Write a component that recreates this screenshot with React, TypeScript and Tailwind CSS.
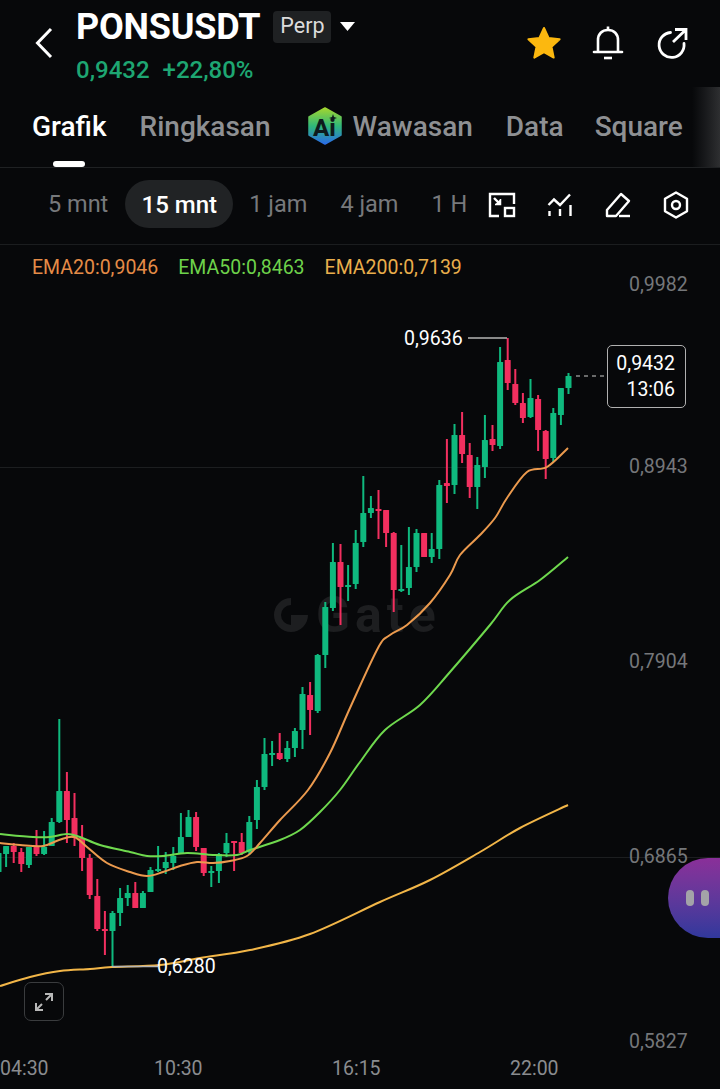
import React from "react";

type C = [string, number, number, number, number];
const candles: C[] = [
  ["g",853,853,872,889],["g",846,846,854,867],["r",843,846,852,863],["r",848,852,864,872],["g",847,847,865,868],
  ["r",830,847,854,856],["g",831,847,854,855],["g",818,822,846,846],["g",719,791,822,823],["r",772,791,820,843],
  ["r",793,818,838,846],["r",825,838,858,871],["r",854,858,895,899],["r",879,896,929,931],["r",911,929,931,955],
  ["g",911,913,931,966],["g",888,898,913,926],["g",885,893,898,906],["r",882,893,908,908],["g",891,893,908,908],
  ["g",867,870,892,892],["g",846,869,871,872],["g",852,862,868,874],["g",847,856,863,870],["g",813,837,854,854],
  ["g",810,817,837,837],["r",812,817,847,851],["r",848,848,873,876],["g",866,871,873,887],["g",853,854,871,883],
  ["g",833,843,853,857],["r",841,841,843,871],["r",833,842,853,855],["g",816,822,852,855],["g",780,787,820,829],
  ["g",738,754,787,790],["g",741,753,755,766],["r",733,753,759,760],["g",741,748,759,762],["g",728,731,748,757],
  ["g",687,694,730,749],["r",682,695,710,735],["g",654,655,711,713],["g",602,607,655,668],["g",543,562,608,611],
  ["r",544,562,587,625],["g",565,585,587,601],["g",530,543,584,589],["g",476,513,542,547],["g",496,508,513,518],
  ["r",490,509,511,539],["r",510,510,533,547],["r",532,533,590,612],["g",545,589,591,592],["g",527,567,588,595],
  ["g",529,533,567,572],["r",533,533,557,557],["g",533,549,557,563],["g",480,485,549,559],["r",439,483,486,503],
  ["g",424,435,485,494],["r",412,435,454,463],["r",443,455,487,498],["g",457,465,487,509],["g",415,440,467,478],
  ["r",425,439,445,451],["g",347,362,446,449],["r",338,360,383,390],["r",369,384,403,405],["r",393,403,418,423],
  ["g",379,398,417,418],["r",395,399,430,451],["r",430,431,459,479],["g",408,413,458,462],["g",388,388,415,425],
  ["g",373,376,388,394],
];

const orange: number[][] = [[0,843],[20,845],[43,846],[59,840],[74,837],[87,847],[107,863],[130,872],[147,876],[163,872],[180,866],[197,862],[213,863],[230,861],[247,856],[260,843],[280,820],[308,790],[330,753],[350,708],[378,648],[390,635],[407,625],[430,603],[450,575],[460,555],[480,535],[495,518],[507,498],[527,472],[547,467],[568,448]];
const green: number[][] = [[0,834],[33,837],[50,837],[67,834],[80,837],[100,845],[130,852],[147,856],[163,856],[187,853],[213,855],[237,855],[250,850],[280,840],[300,830],[320,812],[340,790],[360,762],[385,730],[420,705],[450,672],[490,625],[510,600],[540,580],[568,557]];
const yellow: number[][] = [[0,986],[30,977],[60,971],[90,969],[112,967],[160,965],[200,958],[250,950],[310,934],[380,902],[430,880],[480,852],[520,828],[568,805]];

function smooth(p: number[][]) {
  let d = `M${p[0][0]} ${p[0][1]}`;
  for (let i = 0; i < p.length - 1; i++) {
    const a = p[Math.max(i - 1, 0)], b = p[i], c = p[i + 1], e = p[Math.min(i + 2, p.length - 1)];
    d += ` C${b[0] + (c[0] - a[0]) / 6} ${b[1] + (c[1] - a[1]) / 6} ${c[0] - (e[0] - b[0]) / 6} ${c[1] - (e[1] - b[1]) / 6} ${c[0]} ${c[1]}`;
  }
  return d;
}

const axis: [string, string][] = [["0,9982", "top-[26px]"], ["0,8943", "top-[208px]"], ["0,7904", "top-[403px]"], ["0,6865", "top-[598px]"], ["0,5827", "top-[783px]"]];
const times: [string, string][] = [["04:30", "left-0"], ["10:30", "left-[154px]"], ["16:15", "left-[332px]"], ["22:00", "left-[510px]"]];

export default function App() {
  return (
    <div className="relative flex h-[1089px] w-[720px] flex-col overflow-hidden bg-[#07080a] font-['Roboto',sans-serif]">
      {/* header */}
      <header className="flex h-[87px] shrink-0 items-start">
        <svg width="18" height="32" viewBox="0 0 18 32" className="ml-[35px] mt-[27px] shrink-0" fill="none" stroke="#fff" strokeWidth="3">
          <path d="M16 2 L2.5 16 L16 30" />
        </svg>
        <div className="ml-[23px] flex flex-col">
          <div className="flex h-[54px] items-center pb-[1px]">
            <span className="text-[36px] font-bold leading-none tracking-[-0.2px] text-white">PONSUSDT</span>
            <span className="ml-[13px] flex h-[32px] w-[58px] items-center justify-center rounded-[4px] bg-[#1f2123] text-[21.5px] text-[#dcdcdc]">Perp</span>
            <svg width="15" height="9" viewBox="0 0 15 9" className="ml-[9px]"><path d="M0 0 H15 L7.5 9 Z" fill="#fff" /></svg>
          </div>
          <div className="mt-[1px] flex gap-[13px] text-[24px] font-medium leading-[30px] text-[#1ea672]">
            <span>0,9432</span>
            <span>+22,80%</span>
          </div>
        </div>
        <div className="ml-auto mr-[32px] mt-[25px] flex items-center">
          <svg width="36" height="34" viewBox="0 0 36 34"><path d="M18 2 L22.6 12 L33.6 13.3 L25.5 20.8 L27.7 31.6 L18 26.2 L8.3 31.6 L10.5 20.8 L2.4 13.3 L13.4 12 Z" fill="#fcb80f" stroke="#fcb80f" strokeWidth="2" strokeLinejoin="round" /></svg>
          <svg width="32" height="36" viewBox="0 0 32 36" className="ml-[30px]" fill="none" stroke="#fff" strokeWidth="2.6">
            <path d="M16 1.5 V4.5" />
            <path d="M6 26 V15 C6 9 10 5 16 5 C22 5 26 9 26 15 V26" />
            <path d="M2 27 H30" strokeLinecap="round" />
            <path d="M12 33 H20" />
          </svg>
          <svg width="32" height="34" viewBox="0 0 32 34" className="ml-[32px]" fill="none" stroke="#fff" strokeWidth="2.8">
            <path d="M14.5 6.5 A12.5 12.5 0 1 0 28 17.5" strokeLinecap="round" />
            <path d="M17 16 L29 4.5 M19 3.5 H30 V14" />
          </svg>
        </div>
      </header>

      {/* tabs */}
      <nav className="relative flex h-[81px] shrink-0 items-start border-b border-[#1f2123] text-[28px] font-medium leading-[40px]">
        <div className="relative ml-[32px] mt-[20px] text-white">
          Grafik
          <span className="absolute left-[21px] top-[54px] h-[6px] w-[32px] rounded-full bg-white" />
        </div>
        <div className="ml-[33px] mt-[20px] text-[#8e9093]">Ringkasan</div>
        <svg width="36" height="38" viewBox="0 0 36 38" className="ml-[36px] mt-[20px] shrink-0">
          <defs>
            <linearGradient id="ai" x1="0" y1="0" x2="0" y2="1">
              <stop offset="0" stopColor="#a2d62f" />
              <stop offset="0.5" stopColor="#2fb879" />
              <stop offset="1" stopColor="#2a6ce8" />
            </linearGradient>
          </defs>
          <path d="M18 1 L34 10 V28 L18 37 L2 28 V10 Z" fill="url(#ai)" stroke="url(#ai)" strokeWidth="1.5" strokeLinejoin="round" />
          <text x="6" y="29" fontSize="24" fontWeight="800" fill="#0e1a1c" fontFamily="Roboto, sans-serif">Ai</text>
          <path d="M26 7 L27 10 L30 11 L27 12 L26 15 L25 12 L22 11 L25 10 Z" fill="#0e1a1c" />
        </svg>
        <div className="ml-[10px] mt-[20px] text-[#8e9093]">Wawasan</div>
        <div className="ml-[33px] mt-[20px] text-[#8e9093]">Data</div>
        <div className="ml-[31px] mt-[20px] text-[#8e9093]">Square</div>
        <div className="absolute right-0 top-0 h-full w-[28px] bg-gradient-to-r from-[#07080a] to-[#2e2f31]" />
      </nav>

      {/* timeframe row */}
      <div className="flex h-[77px] shrink-0 items-center border-b border-[#1b1d1f] pb-[4px] text-[23.5px] text-[#77797c]">
        <span className="ml-[48px] mt-[2px]">5 mnt</span>
        <span className="ml-[17px] flex h-[48px] w-[108px] items-center justify-center rounded-full bg-[#212325] pt-[1px] text-[24px] font-medium text-white">15 mnt</span>
        <span className="ml-[16px] mt-[2px]">1 jam</span>
        <span className="ml-[33px] mt-[2px]">4 jam</span>
        <span className="ml-[33px] mt-[2px]">1 H</span>
        <div className="ml-auto mr-[31px] mt-[2px] flex items-center">
          <svg width="28" height="26" viewBox="0 0 28 26" fill="none" stroke="#fff" strokeWidth="2.4">
            <path d="M11 24 H2 V2 H26 V12" />
            <rect x="17" y="16" width="9" height="8" />
            <path d="M6 6 L12 12" />
            <path d="M7 12.5 H12.5 V7" fill="#fff" strokeWidth="1.5" />
          </svg>
          <svg width="26" height="24" viewBox="0 0 26 24" className="ml-[31px]" fill="none" stroke="#fff" strokeWidth="2.4">
            <path d="M1.5 12 L7 6.5 L13 12 L23 1.5" />
            <path d="M2.5 18 V23 M13 16 V23 M23.5 12 V23" />
          </svg>
          <svg width="26" height="26" viewBox="0 0 26 26" className="ml-[32px]" fill="none" stroke="#fff" strokeWidth="2.4" strokeLinejoin="round">
            <path d="M2 18 L16 2 L24 9 L11 24 H2 Z" />
            <path d="M14 24 H25" />
          </svg>
          <svg width="26" height="28" viewBox="0 0 26 28" className="ml-[32px]" fill="none" stroke="#fff" strokeWidth="2.4" strokeLinejoin="round">
            <path d="M13 1.5 L24 7.8 V20.2 L13 26.5 L2 20.2 V7.8 Z" />
            <circle cx="13" cy="14" r="4" />
          </svg>
        </div>
      </div>

      {/* chart */}
      <main className="relative flex-1">
        <div className="flex gap-[20px] pl-[32px] pt-[11px] text-[19.5px] leading-[24px]">
          <span className="text-[#e58c47]">EMA20:0,9046</span>
          <span className="text-[#6ed24b]">EMA50:0,8463</span>
          <span className="text-[#e9ae4c]">EMA200:0,7139</span>
        </div>

        <div className="absolute left-[273px] top-[352px] flex items-center">
          <svg width="36" height="36" viewBox="0 0 36 36">
            <path d="M18 1 A17 17 0 1 0 35 18 H18 V28 A10 10 0 1 1 18 8 Z" fill="#1d1e20" />
          </svg>
          <span className="ml-[7px] text-[50px] font-bold leading-[36px] tracking-[5px] text-[#1d1e20]">Gate</span>
        </div>

        <svg className="absolute inset-0" width="720" height="845" viewBox="0 245 720 845" fill="none">
          <path d="M0 467.5 H610 M0 857.5 H720" stroke="#1c1e20" />
          {candles.map((c, i) => {
            const x = 568.5 - 7.6 * (candles.length - 1 - i);
            const col = c[0] === "g" ? "#0fb97e" : "#f22f5f";
            return (
              <g key={i}>
                <rect x={x - 1} y={c[1]} width="2" height={c[4] - c[1]} fill={col} />
                <rect x={x - 3} y={c[2]} width="6" height={Math.max(c[3] - c[2], 2)} fill={col} rx="0.5" />
              </g>
            );
          })}
          <path d={smooth(yellow)} stroke="#f2b648" strokeWidth="2" />
          <path d={smooth(green)} stroke="#6fd94e" strokeWidth="2" />
          <path d={smooth(orange)} stroke="#eb9a4e" strokeWidth="2" />
          <path d="M468 338 H507" stroke="#b5b5b5" strokeWidth="1.5" />
          <path d="M112 966.5 H158" stroke="#b5b5b5" strokeWidth="1.5" />
          <path d="M576 376 H605" stroke="#8a8a8a" strokeWidth="1.5" strokeDasharray="4 4" />
        </svg>

        {axis.map(([t, p]) => (
          <span key={t} className={`absolute left-[629px] text-[19.5px] leading-[28px] text-[#75777a] ${p}`}>{t}</span>
        ))}
        {times.map(([t, p]) => (
          <span key={t} className={`absolute top-[810px] text-[19.5px] leading-[28px] text-[#8a8c8f] ${p}`}>{t}</span>
        ))}

        <span className="absolute left-[404px] top-[80px] text-[19.5px] leading-[28px] text-white">0,9636</span>
        <span className="absolute left-[157px] top-[708px] text-[19.5px] leading-[28px] text-white">0,6280</span>

        <div className="absolute left-[607px] top-[100px] flex h-[63px] w-[79px] flex-col items-end justify-center rounded-[5px] border-[1.5px] border-[#b0b0b0] bg-[#07080a] pr-[10px] text-[19.5px] leading-[26px] text-white">
          <span>0,9432</span>
          <span>13:06</span>
        </div>

        <div className="absolute left-[24px] top-[737px] flex h-[39px] w-[40px] items-center justify-center rounded-[7px] border border-[#3a3c3e]">
          <svg width="20" height="20" viewBox="0 0 20 20" fill="none" stroke="#b8b8b8" strokeWidth="2">
            <path d="M2 18 L8 12 M12 8 L18 2" />
            <path d="M2 11 V18 H9 M11 2 H18 V9" />
          </svg>
        </div>

        <div className="absolute left-[668px] top-[613px] flex h-[80px] w-[52px] items-center gap-[7px] rounded-l-[42px] bg-gradient-to-b from-[#8a2f99] to-[#30389c] pl-[18px]">
          <span className="h-[16px] w-[8px] rounded-full bg-[#a3a3a8]" />
          <span className="h-[16px] w-[8px] rounded-full bg-[#a3a3a8]" />
        </div>
      </main>
    </div>
  );
}
